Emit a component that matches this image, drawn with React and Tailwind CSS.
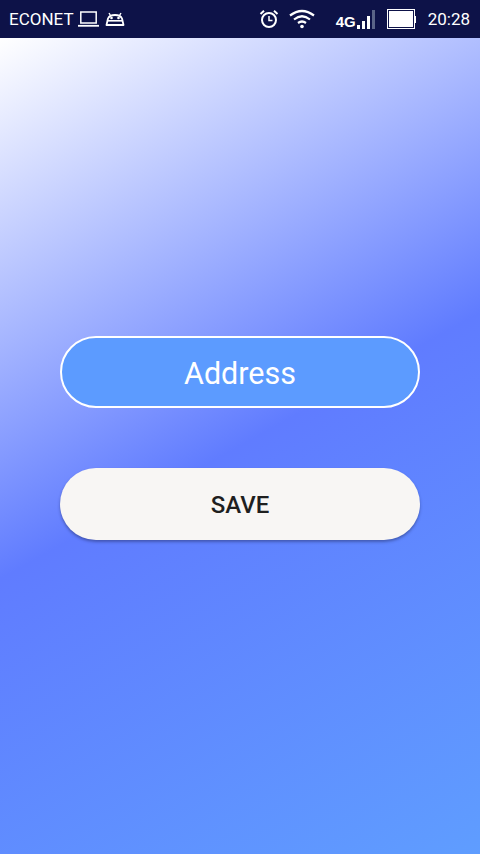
const LaptopIcon = () => (
  <svg width="21" height="16" viewBox="0 0 21 16" fill="none" stroke="white">
    <rect x="2.8" y="1" width="15.4" height="11" strokeWidth="1.5" />
    <path d="M0 14.8 H21" strokeWidth="1.8" />
  </svg>
);

const AndroidIcon = () => (
  <svg width="20" height="14" viewBox="0 0 20 14" fill="none">
    <path d="M1.5 13 L3 6.5 Q4.5 3 10 3 Q15.5 3 17 6.5 L18.5 13 Z" stroke="white" strokeWidth="1.8" strokeLinejoin="round" />
    <path d="M2.5 8.8 H17.5" stroke="white" strokeWidth="1.6" />
    <path d="M5.5 3.5 L4 1 M14.5 3.5 L16 1" stroke="white" strokeWidth="1.4" />
    <circle cx="6.5" cy="6" r="1.3" fill="white" />
    <circle cx="13.5" cy="6" r="1.3" fill="white" />
  </svg>
);

const AlarmIcon = () => (
  <svg width="20" height="20" viewBox="0 0 20 20" fill="none" stroke="white">
    <circle cx="10" cy="11" r="7" strokeWidth="2" />
    <path d="M10 7 V11.5 H13.5" strokeWidth="1.5" />
    <path d="M1.5 5 L5 1.8 M18.5 5 L15 1.8" strokeWidth="2" />
  </svg>
);

const WifiIcon = () => (
  <svg width="26" height="20" viewBox="0 0 26 20" fill="none" stroke="white" strokeWidth="2.2">
    <path d="M1 6.5 Q13 -2.5 25 6.5" />
    <path d="M5 10.5 Q13 4 21 10.5" />
    <path d="M9 14 Q13 11 17 14" />
    <circle cx="13" cy="17.5" r="1.8" fill="white" stroke="none" />
  </svg>
);

const SignalBars = () => (
  <div className="flex items-end gap-[2px] h-[20px]">
    <div className="w-[3px] h-[4px] bg-white" />
    <div className="w-[3px] h-[8px] bg-white" />
    <div className="w-[3px] h-[13px] bg-white" />
    <div className="w-[3px] h-[19px] bg-[#5a6488]" />
  </div>
);

const App = () => {
  return (
    <div className="w-[480px] h-[854px] flex flex-col font-['Roboto',sans-serif] overflow-hidden">
      <div className="h-[38px] shrink-0 bg-[#0d1248] flex items-center justify-between pl-[9px] pr-[10px] text-white">
        <div className="flex items-center">
          <span className="text-[17px] leading-none">ECONET</span>
          <div className="ml-[4px]"><LaptopIcon /></div>
          <div className="ml-[6px]"><AndroidIcon /></div>
        </div>
        <div className="flex items-center">
          <AlarmIcon />
          <div className="ml-[10px]"><WifiIcon /></div>
          <div className="ml-[21px] flex items-end gap-[1px]">
            <span className="text-[15px] leading-none font-bold font-['Liberation_Sans',sans-serif]">4G</span>
            <SignalBars />
          </div>
          <div className="ml-[13px] flex items-center">
            <div className="w-[26px] h-[18px] bg-white border border-[#0d1248] outline outline-1 outline-white" />
            <div className="w-[1px] h-[7px] bg-white ml-[1px]" />
          </div>
          <span className="ml-[12px] text-[17px] leading-none">20:28</span>
        </div>
      </div>
      <div className="flex-1 flex flex-col items-center pt-[298px] bg-[linear-gradient(151deg,#ffffff_0%,#607cff_50%,#5f9dff_100%)]">
        <div className="w-[360px] h-[72px] pt-[4px] rounded-full border-2 border-white bg-[#5c9bff] flex items-center justify-center text-white text-[30.5px]">
          Address
        </div>
        <button className="mt-[60px] w-[360px] h-[72px] pt-[2px] rounded-full bg-[#f8f6f4] text-[#1f1f1f] text-[24px] font-medium shadow-[0_2px_3px_rgba(30,40,90,0.45)]">
          SAVE
        </button>
      </div>
    </div>
  );
};

export default App;
